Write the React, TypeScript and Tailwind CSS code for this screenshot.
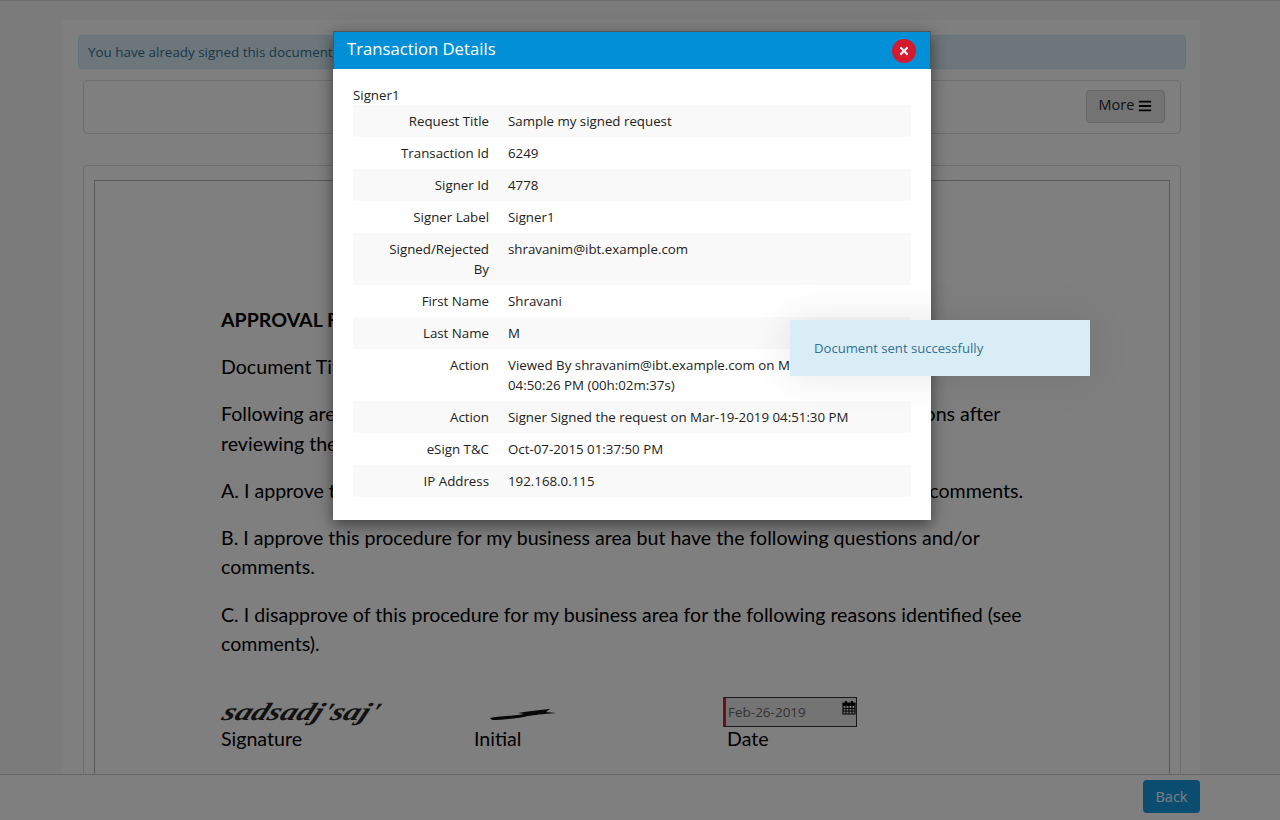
import { FaBars, FaTimes } from 'react-icons/fa'

const ROWS = [
  { label: 'Request Title', value: 'Sample my signed request' },
  { label: 'Transaction Id', value: '6249' },
  { label: 'Signer Id', value: '4778' },
  { label: 'Signer Label', value: 'Signer1' },
  { label: 'Signed/Rejected By', value: 'shravanim@ibt.example.com' },
  { label: 'First Name', value: 'Shravani' },
  { label: 'Last Name', value: 'M' },
  { label: 'Action', value: 'Viewed By shravanim@ibt.example.com on Mar-19-2019 04:50:26 PM (00h:02m:37s)' },
  { label: 'Action', value: 'Signer Signed the request on Mar-19-2019 04:51:30 PM' },
  { label: 'eSign T&C', value: 'Oct-07-2015 01:37:50 PM' },
  { label: 'IP Address', value: '192.168.0.115' },
]

function CalendarIcon() {
  return (
    <svg width="14" height="15" viewBox="0 0 14 15" className="absolute right-0 top-[2px]">
      <path d="M1 3h12v11H1z" fill="none" stroke="#000" strokeWidth="1.2" />
      <path d="M1 3h12v3H1z" fill="#000" />
      <path d="M1 8.5h12M1 11h12M4 6v8M7 6v8M10 6v8" stroke="#000" strokeWidth="1" />
      <path d="M4 1v3M10 1v3" stroke="#000" strokeWidth="2" />
    </svg>
  )
}

function InitialMark() {
  return (
    <svg width="66" height="14" viewBox="0 0 66 14" className="block blur-[0.5px]">
      <path d="M0 10 C10 8 24 8 34 6 L28 5 C38 3 50 2 60 1 L56 4 L66 5 C52 6 44 7 38 8 C26 11 10 12 2 12 Z" fill="#111" />
    </svg>
  )
}

export default function App() {
  return (
    <div className="relative h-[820px] w-[1280px] overflow-hidden bg-[#f6f6f6] font-['Open_Sans',sans-serif]">
      <div className="flex h-full flex-col border-t border-[#dddddd]">
        <main className="min-h-0 flex-1 overflow-hidden pl-[62px] pt-[19px]">
          <div className="h-[800px] w-[1138px] rounded-t bg-white pt-[15px]">
            {/* Alert */}
            <div className="ml-4 h-[34px] w-[1108px] rounded border border-[#bce8f1] bg-[#d9edf7] pl-[9px] text-[13.4px] leading-[32px] text-[#31708f]">
              You have already signed this document
            </div>

            {/* Toolbar */}
            <div className="ml-[21px] mt-[11px] flex h-[54px] w-[1098px] items-start justify-end rounded border border-[#dddddd] pr-[15px] pt-[9px]">
              <button className="flex h-[33px] w-[79px] items-center justify-center gap-1 rounded border border-[#cccccc] bg-[#e6e6e6] pb-[3px] text-[14.5px] text-[#222222]">
                More <FaBars className="mt-[2px] h-[14px] w-[14px] text-black" />
              </button>
            </div>

            {/* Document */}
            <div className="ml-[21px] mt-[31px] h-[700px] w-[1098px] rounded border border-[#dddddd] pl-[10px] pt-[14px]">
              <div className="h-[680px] w-[1076px] border border-[#b4b4b4] pl-[126px] pt-[124px] font-['Lato',sans-serif] text-[19.6px] leading-[29.5px] text-black">
                <p className="font-bold">APPROVAL FORM</p>
                <p className="mt-[17.5px]">Document Title: Sample my signed request</p>
                <p className="mt-[17.5px]">
                  Following are the options available for all approvers. Please choose one of the options after
                  <br />
                  reviewing the procedure.
                </p>
                <p className="mt-[17.5px]">A. I approve this procedure for my business area without noticing any questions or comments.</p>
                <p className="mt-[17.5px]">
                  B. I approve this procedure for my business area but have the following questions and/or
                  <br />
                  comments.
                </p>
                <p className="mt-[18px]">
                  C. I disapprove of this procedure for my business area for the following reasons identified (see
                  <br />
                  comments).
                </p>

                <div className="mt-[38.5px] flex">
                  <div className="w-[253px]">
                    <div className="flex h-[27px] items-end">
                      <span className="ml-[3px] origin-left -skew-x-[18deg] scale-x-[1.3] font-['Liberation_Serif',serif] text-[25px] font-bold italic leading-[24px] text-[#222222]">
                        sadsadj'saj'
                      </span>
                    </div>
                    <div>Signature</div>
                  </div>
                  <div className="w-[249px]">
                    <div className="flex h-[27px] items-center pl-4 pt-2">
                      <InitialMark />
                    </div>
                    <div>Initial</div>
                  </div>
                  <div>
                    <div className="relative flex h-[30px] w-[134px] items-center border border-l-[3px] border-[#333333] border-l-[#d0222c] bg-[#e8e8e8] pl-[2px] pt-px font-['Open_Sans',sans-serif] text-[13.5px] text-[#666666]">
                      Feb-26-2019
                      <CalendarIcon />
                    </div>
                    <div className="-mt-[3px] pl-1">Date</div>
                  </div>
                </div>
              </div>
            </div>
          </div>
        </main>

        {/* Footer */}
        <footer className="relative flex h-[46px] shrink-0 items-start justify-end border-t border-[#cccccc] bg-white pr-20 pt-[5px]">
          <button className="h-[33px] w-[57px] rounded bg-[#149ae0] text-[14.5px] text-white">Back</button>
        </footer>
      </div>

      {/* Backdrop */}
      <div className="absolute inset-0 bg-black/50" />

      {/* Modal */}
      <div className="absolute left-[333px] top-[31px] w-[598px] bg-white shadow-[0_5px_15px_rgba(0,0,0,0.5)]">
        <div className="flex h-[38px] items-center justify-between border border-b-0 border-[#555555] bg-[#0190d8] pl-[13px] pr-[14px]">
          <h4 className="-mt-[3px] text-[16.7px] text-white">Transaction Details</h4>
          <button className="flex h-6 w-6 items-center justify-center rounded-full bg-[#d31a2e]">
            <FaTimes className="h-3 w-3 text-[#eeeeee]" />
          </button>
        </div>
        <div className="px-5 pb-[23px] pt-4 text-[13.3px] leading-5 text-[#222222]">
          <div className="h-5">Signer1</div>
          {ROWS.map((row, i) => (
            <div key={i} className={`flex py-[6px] ${i % 2 === 0 ? 'bg-[#f9f9f9]' : ''}`}>
              <div className="w-[136px] shrink-0 pl-6 text-right">{row.label}</div>
              <div className="pl-[19px] pr-2">{row.value}</div>
            </div>
          ))}
        </div>
      </div>

      {/* Toast */}
      <div className="absolute left-[790px] top-[320px] flex h-14 w-[300px] items-center bg-[#d9edf7] pl-6 pt-px text-[13.1px] text-[#31708f] shadow-[0_0_40px_rgba(0,0,0,0.1)]">
        Document sent successfully
      </div>
    </div>
  )
}
